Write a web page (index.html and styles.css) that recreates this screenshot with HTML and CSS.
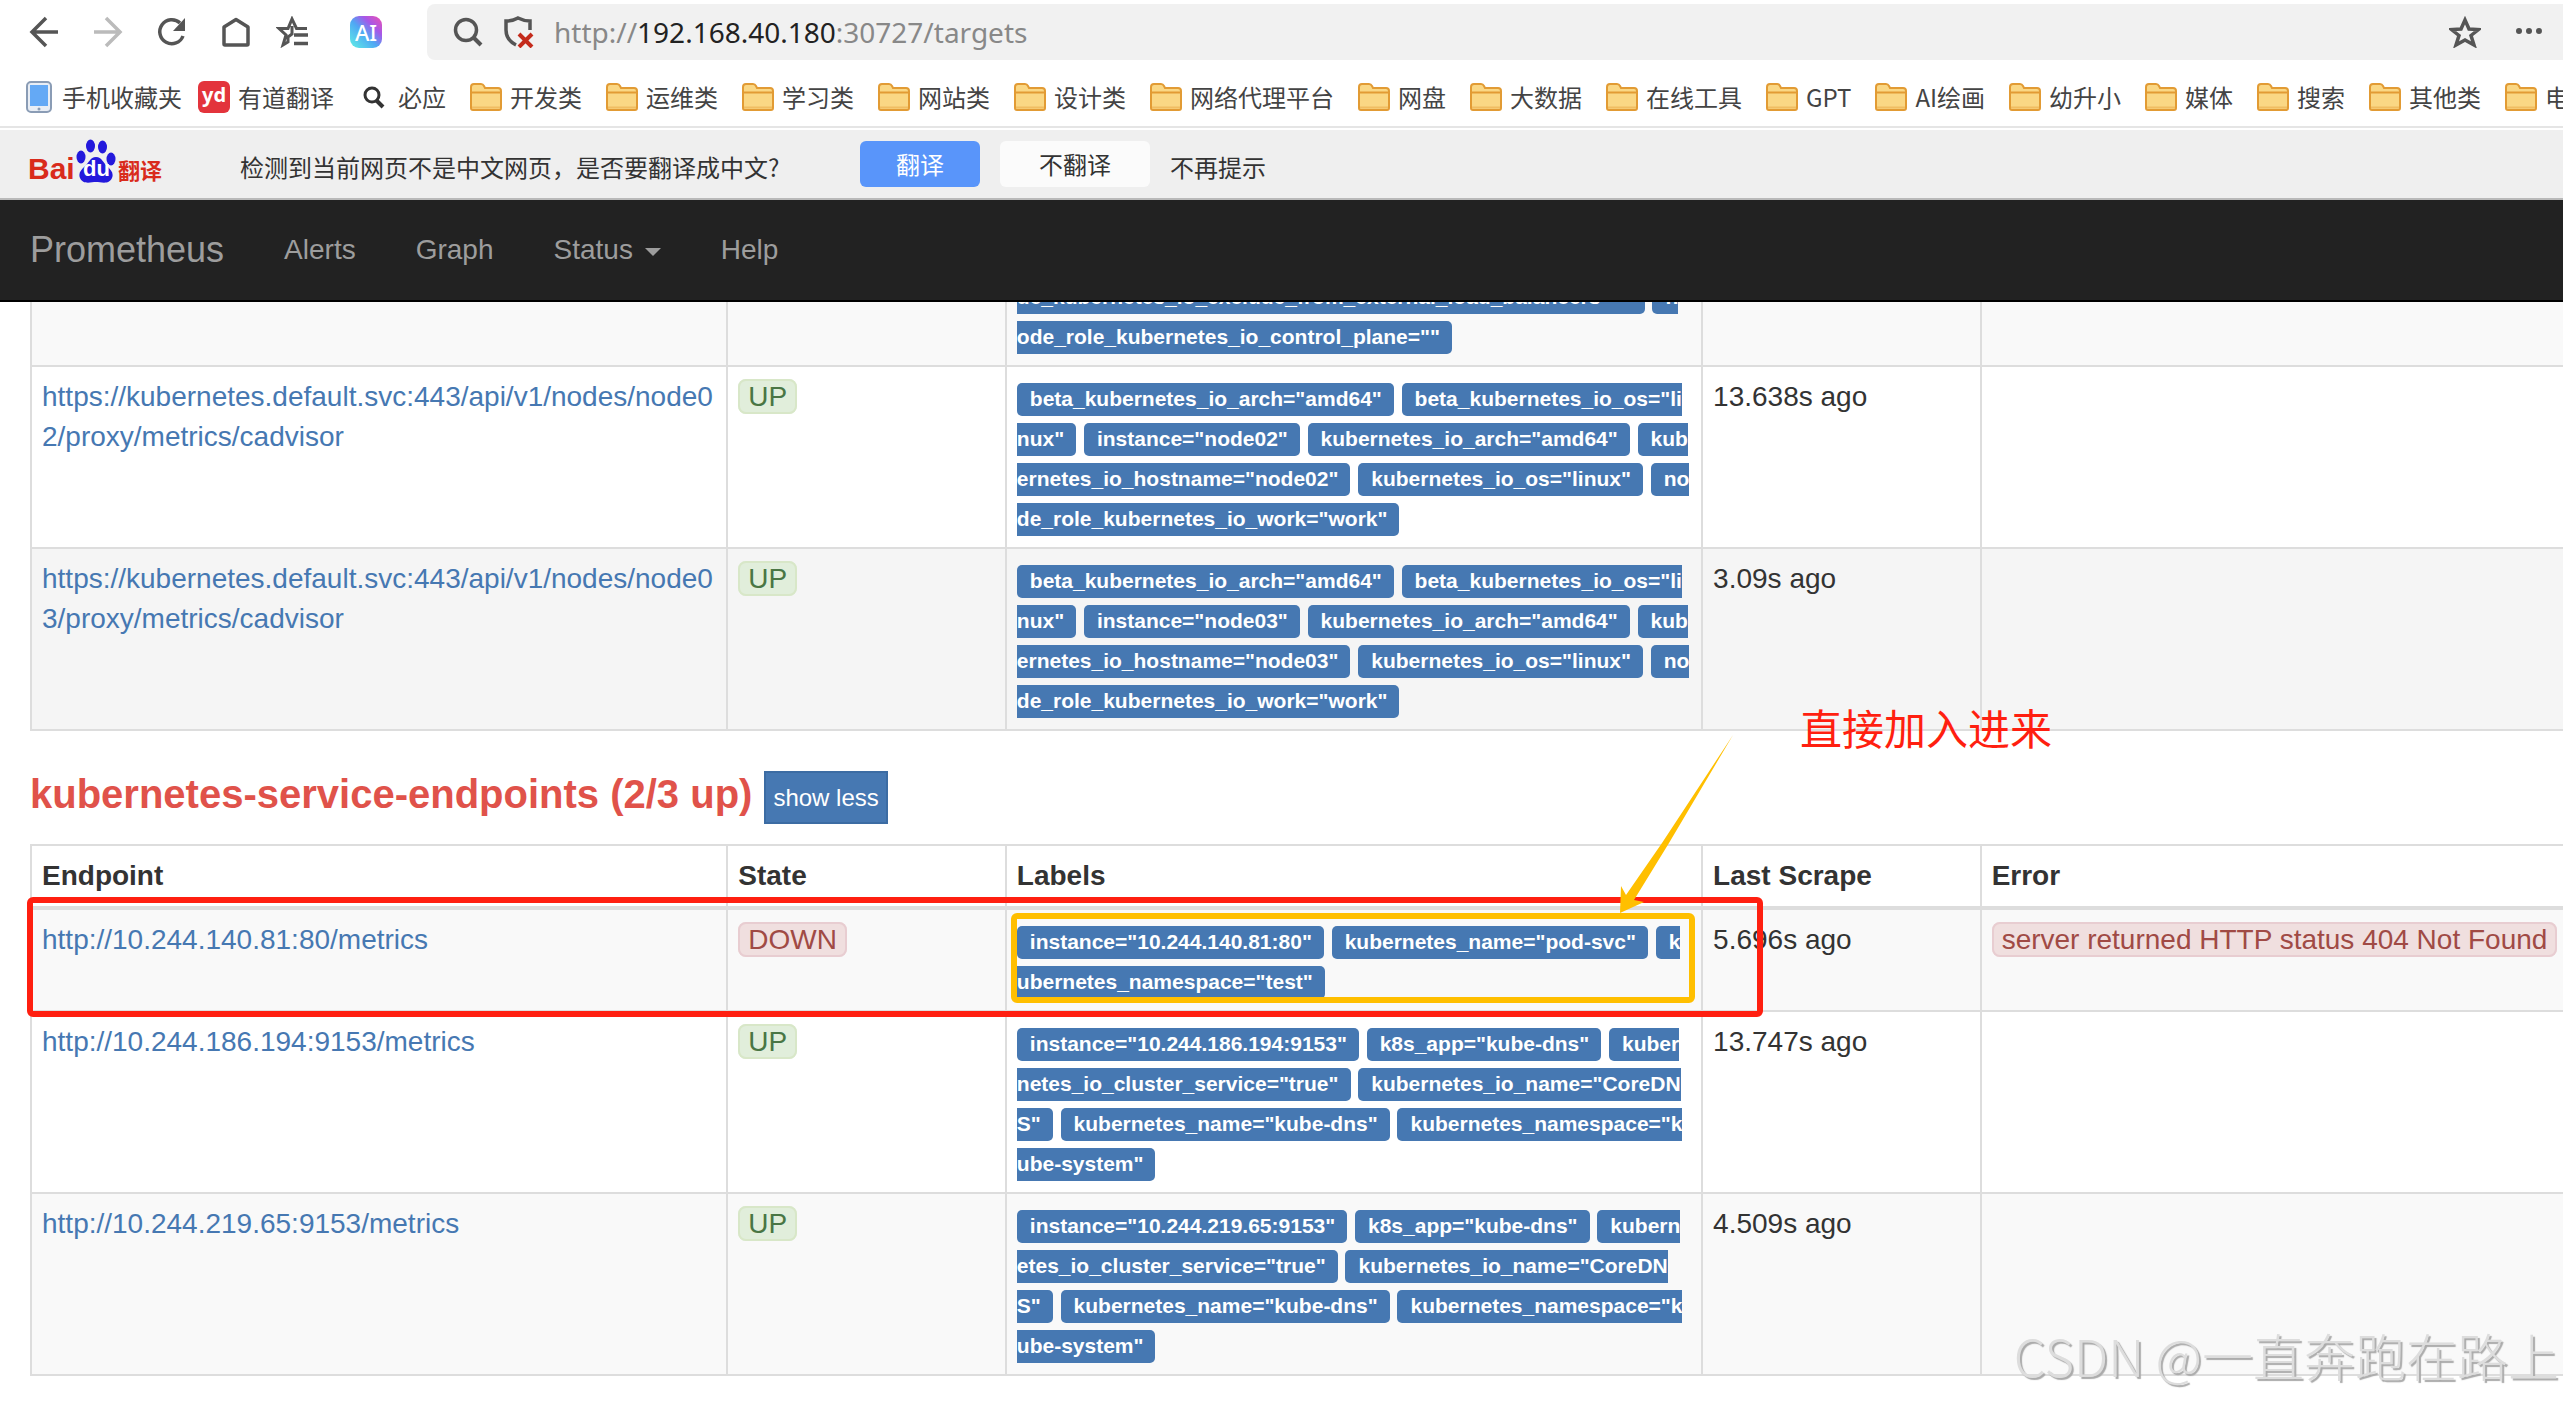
FILE: index.html
```
<!DOCTYPE html>
<html lang="zh-CN">
<head>
<meta charset="utf-8">
<title>Prometheus Targets</title>
<link rel="stylesheet" href="styles.css">
</head>
<body>
<svg class="defs" aria-hidden="true">
  <symbol id="folder" viewBox="0 0 32 28">
    <path d="M1 25V4q0-3 3-3h7q2 0 3 2l1 2h13q3 0 3 3v17q0 2-2 2H3q-2 0-2-2z" fill="#fad784" stroke="#e29b34" stroke-width="2"/>
    <path d="M2 9.500h28" stroke="#e29b34" stroke-width="2"/>
    <path d="M2 24.500h28" stroke="#f0bd62" stroke-width="2"/>
  </symbol>
</svg>
<header class="chrome">
  <div class="toolbar">
    <div class="tools">
      <button class="tool" aria-label="Back"><svg viewBox="0 0 32 32"><path d="M30 16H4M18 2L4 16l14 14" fill="none" stroke="#555" stroke-width="3.500"/></svg></button>
      <button class="tool" aria-label="Forward"><svg viewBox="0 0 32 32"><path d="M2 16h26M14 2l14 14-14 14" fill="none" stroke="#bbb" stroke-width="3.500"/></svg></button>
      <button class="tool" aria-label="Reload"><svg viewBox="0 0 32 32"><path d="M27 20A12 12 0 1 1 24 7" fill="none" stroke="#555" stroke-width="3.500"/><path d="M29 2v13H17z" fill="#555"/></svg></button>
      <button class="tool" aria-label="Home"><svg viewBox="0 0 32 32"><path d="M4 28V11L16 3.500 28 11v17q0 1-1 1H5q-1 0-1-1z" fill="none" stroke="#555" stroke-width="3.500" stroke-linejoin="round"/></svg></button>
      <button class="tool fav" aria-label="Favorites"><svg viewBox="0 0 32 32"><path d="M31 12.500H20.500L16 3l-4 9.500H3l7 6.500-3 10 5-3V21l4-3V10" fill="none" stroke="#555" stroke-width="3"/><path d="M18 19h14M18 27.500h14" stroke="#555" stroke-width="3.500"/></svg></button>
      <button class="tool ai" aria-label="AI">AI</button>
    </div>
    <div class="address">
      <svg class="search" viewBox="0 0 32 32"><circle cx="14" cy="14" r="10.500" fill="none" stroke="#555" stroke-width="3.500"/><path d="M21 21l8 8" stroke="#555" stroke-width="4"/></svg>
      <svg class="shield" viewBox="0 0 32 32"><path d="M14 29Q4 24 4 14V5q7 0 12-3 6 3 12 3v9" fill="none" stroke="#555" stroke-width="3.500"/><path d="M17 18l13 13M30 18L17 31" stroke="#c42b1c" stroke-width="4"/></svg>
      <div class="url">http://<b>192.168.40.180</b>:30727/targets</div>
      <button class="tool" aria-label="Bookmark"><svg viewBox="0 0 32 32"><path d="M16 4l4 9 9.500.5-7.500 6 3 9.500-9-5-9 5 3-9.500-7.500-6 9.500-.5z" fill="none" stroke="#555" stroke-width="3.500"/></svg></button>
      <button class="tool" aria-label="More"><svg viewBox="0 0 32 32"><circle cx="6" cy="15" r="3" fill="#555"/><circle cx="16" cy="15" r="3" fill="#555"/><circle cx="26" cy="15" r="3" fill="#555"/></svg></button>
    </div>
  </div>
  <nav class="bookmarks">
    <a class="mark phone" href="#"><svg viewBox="0 0 26 32"><rect x="1" y="1" width="24" height="30" rx="4" fill="#e9eef5" stroke="#8a9cb5" stroke-width="2"/><rect x="4" y="4" width="18" height="21" fill="#64a9f5"/><circle cx="13" cy="28" r="1.500" fill="#8a9cb5"/></svg>手机收藏夹</a>
    <a class="mark" href="#"><span class="yd">yd</span>有道翻译</a>
    <a class="mark bing" href="#"><svg viewBox="0 0 32 32"><circle cx="14" cy="14" r="7" fill="none" stroke="#333" stroke-width="3"/><path d="M18 19l7 7" stroke="#333" stroke-width="4"/></svg>必应</a>
    <a class="mark" href="#"><svg class="dir"><use href="#folder"/></svg>开发类</a>
    <a class="mark" href="#"><svg class="dir"><use href="#folder"/></svg>运维类</a>
    <a class="mark" href="#"><svg class="dir"><use href="#folder"/></svg>学习类</a>
    <a class="mark" href="#"><svg class="dir"><use href="#folder"/></svg>网站类</a>
    <a class="mark" href="#"><svg class="dir"><use href="#folder"/></svg>设计类</a>
    <a class="mark" href="#"><svg class="dir"><use href="#folder"/></svg>网络代理平台</a>
    <a class="mark" href="#"><svg class="dir"><use href="#folder"/></svg>网盘</a>
    <a class="mark" href="#"><svg class="dir"><use href="#folder"/></svg>大数据</a>
    <a class="mark" href="#"><svg class="dir"><use href="#folder"/></svg>在线工具</a>
    <a class="mark" href="#"><svg class="dir"><use href="#folder"/></svg>GPT</a>
    <a class="mark" href="#"><svg class="dir"><use href="#folder"/></svg>AI绘画</a>
    <a class="mark" href="#"><svg class="dir"><use href="#folder"/></svg>幼升小</a>
    <a class="mark" href="#"><svg class="dir"><use href="#folder"/></svg>媒体</a>
    <a class="mark" href="#"><svg class="dir"><use href="#folder"/></svg>搜索</a>
    <a class="mark" href="#"><svg class="dir"><use href="#folder"/></svg>其他类</a>
    <a class="mark" href="#"><svg class="dir"><use href="#folder"/></svg>电</a>
  </nav>
</header>
<section class="translate">
  <div class="baidu"><span class="bai">Bai</span><span class="paw"><svg viewBox="0 0 40 44"><g fill="#2319dc"><ellipse cx="5" cy="18" rx="4.500" ry="6.500"/><ellipse cx="14.500" cy="7" rx="4.500" ry="6.500"/><ellipse cx="26.500" cy="8" rx="4.500" ry="6.500"/><ellipse cx="35" cy="20" rx="4.500" ry="6.500"/><path d="M20 18c6 0 7 6 11 9 4 4 7 7 5 12-3 7-11 4-16 4s-13 3-16-4c-2-5 1-8 5-12 4-3 5-9 11-9z"/></g></svg><span class="du">du</span></span><span class="fanyi">翻译</span></div>
  <p class="ask">检测到当前网页不是中文网页，是否要翻译成中文?</p>
  <button class="yes">翻译</button>
  <button class="no">不翻译</button>
  <a class="never" href="#">不再提示</a>
</section>
<nav class="navbar">
  <a class="brand" href="#">Prometheus</a>
  <a href="#">Alerts</a>
  <a href="#">Graph</a>
  <a href="#">Status <span class="caret"></span></a>
  <a href="#">Help</a>
</nav>
<main class="page">
  <div class="scrolled">
  <table class="targets">
    <colgroup><col class="wide"><col class="slim"><col class="wide"><col class="slim"><col></colgroup>
    <tbody>
      <tr>
        <td></td><td></td>
        <td><span class="label">beta_kubernetes_io_arch="amd64"</span> <span class="label">beta_kubernetes_io_os="linux"</span> <span class="label">instance="node01"</span> <span class="label">kubernetes_io_arch="amd64"</span> <span class="label">kubernetes_io_hostname="node01"</span> <span class="label">kubernetes_io_os="linux"</span> <span class="label">node_kubernetes_io_exclude_from_external_load_balancers=""</span> <span class="label">n<span class="keep">ode</span>_role_kubernetes_io_control_plane=""</span></td>
        <td></td><td></td>
      </tr>
      <tr>
        <td><a href="#">https://kubernetes.default.svc:443/api/v1/nodes/node02/proxy/metrics/cadvisor</a></td>
        <td><span class="alert up">UP</span></td>
        <td><span class="label">beta_kubernetes_io_arch="amd64"</span> <span class="label">beta_kubernetes_io_os="linux"</span> <span class="label">instance="node02"</span> <span class="label">kubernetes_io_arch="amd64"</span> <span class="label">kubernetes_io_hostname="node02"</span> <span class="label">kubernetes_io_os="linux"</span> <span class="label">node_role_kubernetes_io_work="work"</span></td>
        <td>13.638s ago</td><td></td>
      </tr>
      <tr class="hover">
        <td><a href="#">https://kubernetes.default.svc:443/api/v1/nodes/node03/proxy/metrics/cadvisor</a></td>
        <td><span class="alert up">UP</span></td>
        <td><span class="label">beta_kubernetes_io_arch="amd64"</span> <span class="label">beta_kubernetes_io_os="linux"</span> <span class="label">instance="node03"</span> <span class="label">kubernetes_io_arch="amd64"</span> <span class="label">kubernetes_io_hostname="node03"</span> <span class="label">kubernetes_io_os="linux"</span> <span class="label">node_role_kubernetes_io_work="work"</span></td>
        <td>3.09s ago</td><td></td>
      </tr>
    </tbody>
  </table>
  </div>
  <div class="job">
    <h2>kubernetes-service-endpoints (2/3 up)</h2>
    <button class="toggle">show less</button>
  </div>
  <div class="pool">
  <table class="targets">
    <colgroup><col class="wide"><col class="slim"><col class="wide"><col class="slim"><col></colgroup>
    <thead>
      <tr><th>Endpoint</th><th>State</th><th>Labels</th><th>Last Scrape</th><th>Error</th></tr>
    </thead>
    <tbody>
      <tr>
        <td><a href="#">http://10.244.140.81:80/metrics</a></td>
        <td><span class="alert down">DOWN</span></td>
        <td><span class="label">instance="10.244.140.81:80"</span> <span class="label">kubernetes_name="pod-svc"</span> <span class="label">kubernetes_namespace="test"</span></td>
        <td>5.696s ago</td>
        <td><span class="alert down">server returned HTTP status 404 Not Found</span></td>
      </tr>
      <tr>
        <td><a href="#">http://10.244.186.194:9153/metrics</a></td>
        <td><span class="alert up">UP</span></td>
        <td><span class="label">instance="10.244.186.194:9153"</span> <span class="label">k8s_app="kube-dns"</span> <span class="label">kubernetes_io_cluster_service="true"</span> <span class="label">kubernetes_io_name="CoreDNS"</span> <span class="label">kubernetes_name="kube-dns"</span> <span class="label">kubernetes_namespace="kube-system"</span></td>
        <td>13.747s ago</td><td></td>
      </tr>
      <tr>
        <td><a href="#">http://10.244.219.65:9153/metrics</a></td>
        <td><span class="alert up">UP</span></td>
        <td><span class="label">instance="10.244.219.65:9153"</span> <span class="label">k8s_app="kube-dns"</span> <span class="label">kubernetes_io_cluster_service="true"</span> <span class="label">kubernetes_io_name="CoreDNS"</span> <span class="label">kubernetes_name="kube-dns"</span> <span class="label">kubernetes_namespace="kube-system"</span></td>
        <td>4.509s ago</td><td></td>
      </tr>
    </tbody>
  </table>
  <div class="frame red"></div>
  <div class="frame gold"></div>
  <svg class="arrow" viewBox="0 0 116 180"><path d="M0 178L1 151l5 9L42 108 113 0 49 108 14 165l10 2z" fill="#ffbf00"/></svg>
  <p class="note">直接加入进来</p>
  <p class="watermark">CSDN @一直奔跑在路上</p>
  </div>
</main>
</body>
</html>
```
FILE: styles.css
```
* { box-sizing: border-box; }
html { background: #fff; }
body {
  margin: 0;
  min-height: 100vh;
  color: #333;
  font: 28px/40px "Liberation Sans", Arial, "Noto Sans CJK SC", sans-serif;
}
a { color: #4678b2; text-decoration: none; }
p, h2 { margin: 0; }
button { border: 0; padding: 0; background: none; font: inherit; color: inherit; }
.defs { position: absolute; width: 0; height: 0; }

.chrome { border-bottom: 2px solid #e5e5e5; margin-bottom: 2px; height: 128px; overflow: hidden; }
.toolbar { display: flex; padding-top: 4px; }
.tools { flex: none; width: 427px; display: flex; align-items: center; gap: 32px; padding-left: 28px; }
.tool { flex: none; width: 32px; height: 32px; }
.tool svg { display: block; width: 32px; height: 32px; }
.fav { margin-left: -8px; }
.ai {
  margin-left: 10px;
  border-radius: 9px;
  background: linear-gradient(45deg, #5ce0e8 10%, #4fa8f4 45%, #a558e8 70%, #f050b0);
  color: #fff;
  font: 500 22px/32px "Noto Sans", sans-serif;
}
.address {
  flex: 1;
  height: 56px;
  display: flex;
  align-items: center;
  gap: 18px;
  padding: 0 18px 0 25px;
  background: #f1f1f1;
  border-radius: 8px 0 0 8px;
}
.address > svg { width: 32px; height: 32px; }
.url { flex: 1; padding-left: 2px; color: #888; font: 28px/40px "Noto Sans", "Open Sans", sans-serif; }
.url b { color: #222; font-weight: 400; }
.address .tool + .tool { margin-left: 14px; }

.bookmarks { display: flex; gap: 24px; height: 66px; margin-top: 4px; padding-left: 26px; align-items: center; }
.mark { flex: none; display: flex; align-items: center; gap: 8px; color: #444; font: 24px/36px "Noto Sans CJK SC", sans-serif; white-space: nowrap; }
.phone { gap: 10px; margin-right: -8px; }
.phone svg { width: 26px; height: 32px; }
.bing svg { width: 32px; height: 32px; }
.dir { width: 32px; height: 28px; }
.yd { width: 32px; height: 32px; border-radius: 6px; background: #e3343c; color: #fff; font: bold 20px/28px "Noto Sans", sans-serif; text-align: center; }

.translate { display: flex; align-items: center; height: 70px; background: #efefef; border-bottom: 2px solid #b9b9b9; padding-left: 28px; font: 24px/36px "Noto Sans CJK SC", sans-serif; }
.baidu { flex: none; width: 212px; padding-bottom: 6px; display: flex; align-items: flex-end; color: #d92b1c; font: bold 30px/28px "Liberation Sans", Arial, sans-serif; }
.bai { width: 48px; }
.paw { position: relative; width: 42px; height: 44px; }
.paw svg { display: block; width: 40px; height: 44px; }
.du { position: absolute; left: 7px; bottom: 3px; color: #fff; font-size: 22px; line-height: 22px; }
.fanyi { font: bold 22px/28px "Noto Sans CJK SC", sans-serif; }
.ask { flex: none; width: 620px; padding-top: 6px; }
.yes, .no { height: 46px; border-radius: 6px; }
.yes { width: 120px; background: #5995fa; color: #fff; margin-right: 20px; }
.no { width: 150px; background: #fbfbfb; margin-right: 20px; }
.never { color: #333; padding-top: 6px; }

.navbar { display: flex; height: 102px; background: #222; border-bottom: 2px solid #000; line-height: 100px; }
.navbar a { color: #9d9d9d; padding: 0 30px; }
.navbar .brand { font-size: 36px; }
.caret { display: inline-block; margin-left: 4px; vertical-align: middle; border: 8px solid transparent; border-top-color: #9d9d9d; border-bottom: 0; }

.page { padding-left: 30px; }
.scrolled { height: 429px; overflow: hidden; display: flex; align-items: flex-end; }
.targets { width: 100%; table-layout: fixed; border-collapse: collapse; word-break: break-all; }
.wide { width: 27.5%; }
.slim { width: 11%; }
.targets td, .targets th { border: 2px solid #ddd; border-right: 0; padding: 10px; text-align: left; vertical-align: top; }
.targets td:last-child { padding-right: 0; }
.targets th { border-bottom-width: 4px; }
.targets tbody tr:nth-child(odd) { background: #f9f9f9; }
.targets tbody tr.hover { background: #f5f5f5; }
.label { padding: 4px 12px 6px 13px; border-radius: 5px; background: #4678b2; color: #fff; font-size: 21px; font-weight: 700; line-height: 21px; }
.keep { white-space: nowrap; }
.alert { padding: 0 8px; border: 2px solid; border-radius: 8px; white-space: nowrap; }
.up { background: #e1eedb; border-color: #d8e7c8; color: #4a7644; }
.down { background: #f0dfdf; border-color: #e8cdd1; color: #a04a45; }

.job { display: flex; align-items: center; gap: 12px; padding: 40px 0 20px; }
.job h2 { color: #e0524a; font-size: 40px; line-height: 44px; padding-bottom: 8px; }
.toggle { height: 53px; padding: 0 7px; border: 2px solid #3c6ca3; background: #4678b2; color: #fff; font-size: 24px; }

.pool { position: relative; padding-bottom: 26px; }
.frame { position: absolute; border: 6px solid; border-radius: 6px; }
.red { left: -3px; top: 53px; width: 1736px; height: 120px; border-color: #ff1f10; }
.gold { left: 981px; top: 69px; width: 684px; height: 90px; border-color: #ffbf00; }
.arrow { position: absolute; left: 1590px; top: -109px; width: 116px; height: 180px; }
.note { position: absolute; left: 1770px; top: -147px; color: #ff1f10; font: 42px/60px "Noto Sans CJK SC", sans-serif; }
.watermark { position: absolute; right: 4px; top: 476px; color: #ddd; font: 300 51px/70px "Noto Sans CJK SC", sans-serif; text-shadow: 2px 2px 1px #aaa; white-space: nowrap; }
```
